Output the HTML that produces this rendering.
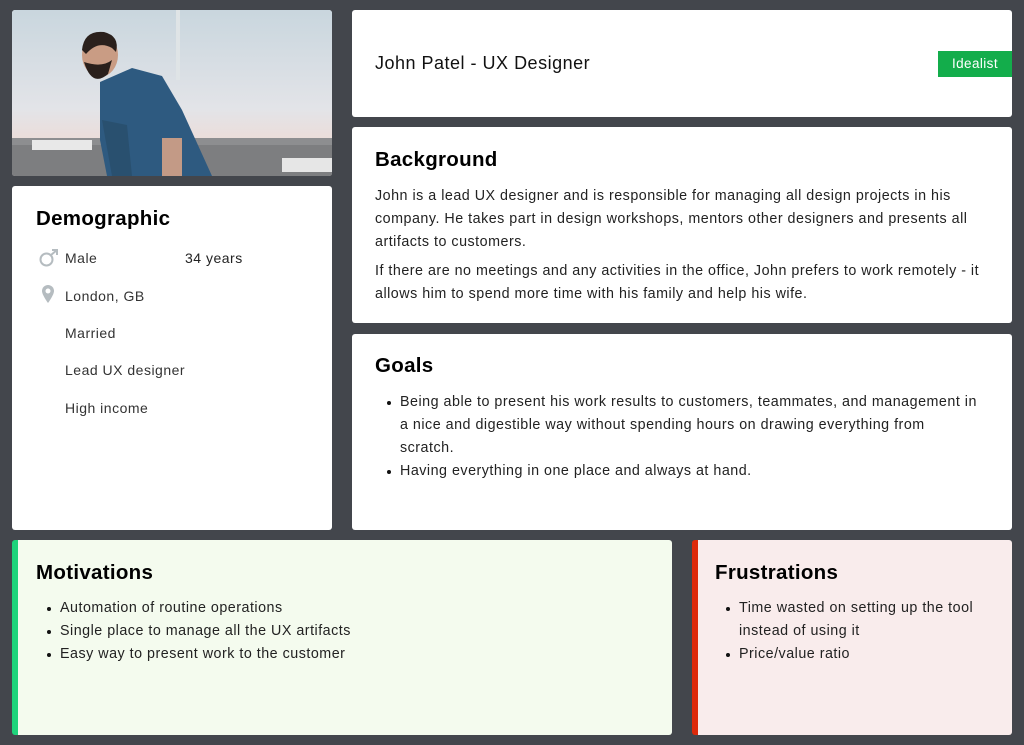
<!DOCTYPE html>
<html><head><meta charset="utf-8"><style>
*{margin:0;padding:0;box-sizing:border-box}
body{width:1024px;height:745px;background:#43464c;font-family:"Liberation Sans",sans-serif;color:#222;position:relative;overflow:hidden}
.c{position:absolute;background:#fff;border-radius:3px}
h2{font-size:20.5px;font-weight:bold;color:#000;letter-spacing:.3px}
p,li{font-size:14.3px;letter-spacing:.5px;line-height:23px;color:#222}
ul{list-style:none}
li{position:relative;padding-left:24px}
li:before{content:"";position:absolute;left:11px;top:10px;width:4px;height:4px;border-radius:50%;background:#111}
.d{position:absolute;left:53px;font-size:14px;letter-spacing:.5px;color:#333}
</style></head><body>
<div class="c" style="left:12px;top:10px;width:320px;height:166px;overflow:hidden">
<svg width="320" height="166" viewBox="0 0 320 166">
<defs><linearGradient id="s" x1="0" y1="0" x2="0" y2="1"><stop offset="0" stop-color="#c9d6de"/><stop offset=".6" stop-color="#e3e4e8"/><stop offset=".8" stop-color="#ecdcd8"/></linearGradient></defs>
<rect width="320" height="166" fill="url(#s)"/>
<rect x="164" y="0" width="4" height="70" fill="#dfe4e6"/>
<rect y="128" width="320" height="38" fill="#8d8e90"/>
<rect y="135" width="320" height="31" fill="#7d7e80"/>
<rect x="20" y="130" width="60" height="10" fill="#e8e8e8"/>
<rect x="270" y="148" width="50" height="14" fill="#e6e6e6"/>
<path d="M88 72 L120 58 L150 66 L170 100 L200 166 L95 166 L88 130 Z" fill="#2e5a80"/>
<path d="M90 110 L115 115 L120 166 L100 166 Z" fill="#29506f"/>
<rect x="150" y="128" width="20" height="38" fill="#c39a86"/>
<ellipse cx="88" cy="45" rx="18" ry="22" fill="#c99c84"/>
<path d="M70 40 Q72 20 92 22 Q108 26 104 42 L100 38 Q86 30 74 44 Z" fill="#2a201c"/>
<path d="M72 52 Q80 78 96 64 L100 50 Q90 58 72 52Z" fill="#2a201c"/>
</svg></div>
<div class="c" style="left:12px;top:186px;width:320px;height:344px">
<h2 style="position:absolute;left:24px;top:21px">Demographic</h2>
<svg style="position:absolute;left:27px;top:63px" width="20" height="18" viewBox="0 0 20 18"><circle cx="7.5" cy="10.5" r="6" fill="none" stroke="#b5bcc0" stroke-width="2"/><path d="M12 6 L18 1 M13 1 H18 V6" fill="none" stroke="#b5bcc0" stroke-width="2"/></svg>
<div class="d" style="top:64px">Male</div><div class="d" style="top:64px;left:173px;color:#222">34 years</div>
<svg style="position:absolute;left:29px;top:98px" width="14" height="20" viewBox="0 0 14 20"><path d="M7 1 A6 6 0 0 1 13 7 C13 11 7 19 7 19 C7 19 1 11 1 7 A6 6 0 0 1 7 1Z" fill="#b5bcc0"/><circle cx="7" cy="7" r="2.5" fill="#fff"/></svg>
<div class="d" style="top:102px">London, GB</div>
<div class="d" style="top:139px">Married</div>
<div class="d" style="top:176px">Lead UX designer</div>
<div class="d" style="top:214px">High income</div>
</div>
<div class="c" style="left:352px;top:10px;width:660px;height:107px">
<div style="position:absolute;left:23px;top:43px;font-size:18px;letter-spacing:.5px;color:#111">John Patel - UX Designer</div>
<div style="position:absolute;right:0;top:41px;width:74px;height:26px;background:#13ad4b;color:#fff;font-size:13.5px;line-height:26px;text-align:center;letter-spacing:.4px">Idealist</div>
</div>
<div class="c" style="left:352px;top:127px;width:660px;height:196px;padding:21px 23px">
<h2>Background</h2>
<p style="margin-top:13px">John is a lead UX designer and is responsible for managing all design projects in his company. He takes part in design workshops, mentors other designers and presents all artifacts to customers.</p>
<p style="margin-top:6px">If there are no meetings and any activities in the office, John prefers to work remotely - it allows him to spend more time with his family and help his wife.</p>
</div>
<div class="c" style="left:352px;top:334px;width:660px;height:196px;padding:20px 23px">
<h2>Goals</h2>
<ul style="margin-top:13px;margin-left:1px;width:604px"><li>Being able to present his work results to customers, teammates, and management in a nice and digestible way without spending hours on drawing everything from scratch.</li><li>Having everything in one place and always at hand.</li></ul>
</div>
<div class="c" style="left:12px;top:540px;width:660px;height:195px;background:#f4fbee;border-left:6px solid #1ed37b;padding:21px 18px">
<h2>Motivations</h2>
<ul style="margin-top:12px"><li>Automation of routine operations</li><li>Single place to manage all the UX artifacts</li><li>Easy way to present work to the customer</li></ul>
</div>
<div class="c" style="left:692px;top:540px;width:320px;height:195px;background:#f9ecec;border-left:6px solid #dd2a0b;padding:21px 17px">
<h2>Frustrations</h2>
<ul style="margin-top:12px"><li>Time wasted on setting up the tool instead of using it</li><li>Price/value ratio</li></ul>
</div>
</body></html>
